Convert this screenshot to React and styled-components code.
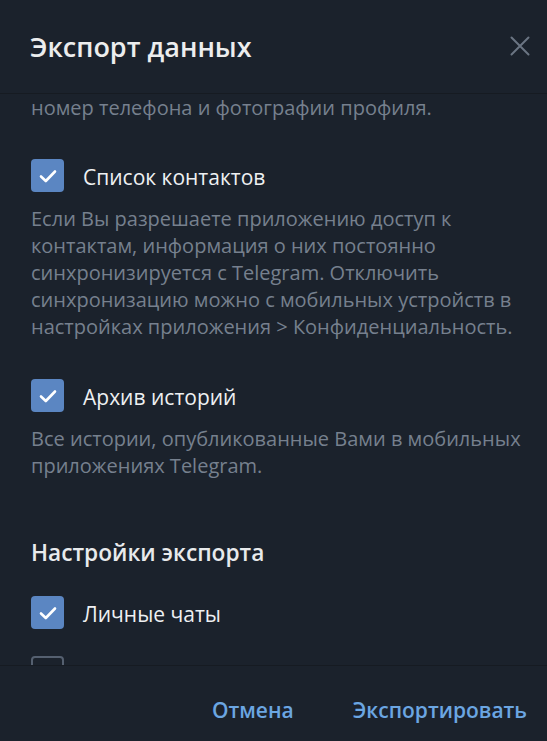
import React from "react";
import styled, { createGlobalStyle } from "styled-components";

const GlobalStyle = createGlobalStyle`
  html, body {
    margin: 0;
    padding: 0;
    background: #1b222c;
  }
  body {
    font-family: "Open Sans", "Noto Sans", sans-serif;
    -webkit-font-smoothing: antialiased;
  }
`;

const Dialog = styled.div`
  width: 547px;
  height: 741px;
  background: #1b222c;
  display: flex;
  flex-direction: column;
  overflow: hidden;
`;

const Header = styled.div`
  height: 94px;
  flex-shrink: 0;
  display: flex;
  align-items: center;
  justify-content: space-between;
  padding: 0 17px 0 30px;
  box-sizing: border-box;
  border-bottom: 1px solid #161b22;
`;

const Title = styled.h1`
  margin: 0;
  font-size: 27px;
  font-weight: 600;
  color: #ecedee;
`;

const CloseButton = styled.button`
  width: 20px;
  height: 20px;
  padding: 0;
  border: 0;
  background: none;
  display: flex;
  margin-top: -2px;
`;

const Body = styled.div`
  flex: 1;
  overflow: hidden;
  padding: 0 18px 0 31px;
`;

const Description = styled.p`
  margin: 0;
  font-size: 20px;
  line-height: 27px;
  color: #76808e;
`;

const CheckRow = styled.label`
  display: flex;
  align-items: center;
  gap: 19px;
  height: 33px;
  margin-top: ${(p) => p.$top}px;
  margin-bottom: ${(p) => p.$bottom || 0}px;
`;

const Box = styled.span`
  width: 33px;
  height: 33px;
  box-sizing: border-box;
  border-radius: 4px;
  flex-shrink: 0;
  display: flex;
  align-items: center;
  justify-content: center;
  background: ${(p) => (p.$checked ? "#5b86c2" : "transparent")};
  border: ${(p) => (p.$checked ? "none" : "2.5px solid #556070")};
`;

const Label = styled.span`
  font-size: 21px;
  color: #eef0f2;
  margin-top: 2px;
`;

const SectionTitle = styled.h2`
  margin: 60px 0 0;
  font-size: 22.7px;
  line-height: 27px;
  font-weight: 600;
  color: #e8eaec;
`;

const Footer = styled.div`
  height: 76px;
  flex-shrink: 0;
  border-top: 1px solid #161b22;
  display: flex;
  align-items: center;
  justify-content: flex-end;
  gap: 59px;
  padding: 0 20px 0 0;
  box-sizing: border-box;
`;

const ActionButton = styled.button`
  border: 0;
  background: none;
  padding: 0;
  font-family: inherit;
  font-size: 21px;
  font-weight: 600;
  color: #6ba6e2;
  margin-top: 12px;
`;

const Check = ({ checked, label, top, bottom }) => (
  <CheckRow $top={top} $bottom={bottom}>
    <Box $checked={checked}>
      {checked && (
        <svg width="18" height="14" viewBox="0 0 18 14">
          <path
            d="M2 7.5 L6.8 12 L16 2.5"
            fill="none"
            stroke="#fff"
            strokeWidth="2.6"
            strokeLinecap="round"
            strokeLinejoin="round"
          />
        </svg>
      )}
    </Box>
    {label && <Label>{label}</Label>}
  </CheckRow>
);

export default function App() {
  return (
    <>
      <GlobalStyle />
      <Dialog>
        <Header>
          <Title>Экспорт данных</Title>
          <CloseButton aria-label="Закрыть">
            <svg width="20" height="20" viewBox="0 0 20 20">
              <path
                d="M1.5 1.5 L18.5 18.5 M18.5 1.5 L1.5 18.5"
                stroke="#6b7583"
                strokeWidth="2"
                strokeLinecap="round"
              />
            </svg>
          </CloseButton>
        </Header>
        <Body>
          <Description>номер телефона и фотографии профиля.</Description>
          <Check checked top={38} bottom={13} label="Список контактов" />
          <Description>
            Если Вы разрешаете приложению доступ к контактам, информация о них
            постоянно синхронизируется с Telegram. Отключить синхронизацию
            можно с мобильных устройств в настройках приложения &gt;
            Конфиденциальность.
          </Description>
          <Check checked top={39} bottom={13} label="Архив историй" />
          <Description>
            Все истории, опубликованные Вами в мобильных приложениях Telegram.
          </Description>
          <SectionTitle>Настройки экспорта</SectionTitle>
          <Check checked top={30} label="Личные чаты" />
          <Check top={27} label="Чаты с ботами" />
        </Body>
        <Footer>
          <ActionButton>Отмена</ActionButton>
          <ActionButton>Экспортировать</ActionButton>
        </Footer>
      </Dialog>
    </>
  );
}
